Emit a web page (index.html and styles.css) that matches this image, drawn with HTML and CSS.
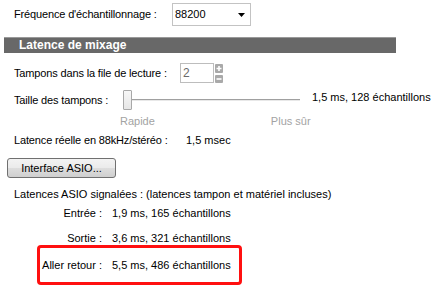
FILE: index.html
```html
<!DOCTYPE html>
<html lang="fr">
<head>
<meta charset="utf-8">
<link rel="stylesheet" href="styles.css">
</head>
<body>
<div class="panel">
  <div class="row freq">
    <span class="lbl w-freq">Fréquence d'échantillonnage :</span>
    <div class="select">
      <span class="select-val">88200</span>
      <svg class="select-arrow" width="7" height="4" viewBox="0 0 7 4"><path d="M0 0H7L3.5 4Z" fill="#000"/></svg>
    </div>
  </div>

  <div class="header">Latence de mixage</div>

  <div class="row tampons">
    <span class="lbl w-tampons">Tampons dans la file de lecture :</span>
    <div class="spin-box">2</div>
    <div class="spin-btns">
      <svg width="8" height="9" viewBox="0 0 8 9"><rect x="0" y="0" width="8" height="9" rx="1" fill="#a9a9a9"/><path d="M1.5 4.5H6.5M4 2V7" stroke="#fff" stroke-width="1.6"/></svg>
      <svg width="8" height="8" viewBox="0 0 8 8"><rect x="0" y="0" width="8" height="8" rx="1" fill="#a9a9a9"/><path d="M1.5 4H6.5" stroke="#fff" stroke-width="1.6"/></svg>
    </div>
  </div>

  <div class="row slider-row">
    <span class="lbl w-taille">Taille des tampons :</span>
    <div class="slider">
      <div class="thumb"></div>
      <div class="track"></div>
    </div>
    <span class="slider-val">1,5 ms, 128 échantillons</span>
  </div>

  <div class="row scale">
    <span class="scale-left">Rapide</span>
    <span class="scale-right">Plus sûr</span>
  </div>

  <div class="row reelle">
    <span class="lbl w-reelle">Latence réelle en 88kHz/stéréo :</span>
    <span>1,5 msec</span>
  </div>

  <button class="btn" type="button">Interface ASIO...</button>

  <div class="row asio-title">Latences ASIO signalées : (latences tampon et matériel incluses)</div>

  <div class="lat-list">
    <div class="lat-row entree"><span class="lat-lbl">Entrée :</span><span>1,9 ms, 165 échantillons</span></div>
    <div class="lat-row sortie"><span class="lat-lbl">Sortie :</span><span>3,6 ms, 321 échantillons</span></div>
    <div class="lat-row roundtrip"><span class="lat-lbl">Aller retour :</span><span>5,5 ms, 486 échantillons</span></div>
  </div>
</div>
</body>
</html>
```

FILE: styles.css
```css
html, body {
  margin: 0;
  padding: 0;
  background: #ffffff;
}

body {
  font-family: "Liberation Sans", Arial, sans-serif;
  font-size: 11px;
  line-height: 13px;
  color: #000;
  width: 443px;
  height: 289px;
  overflow: hidden;
}

.panel {
  display: flex;
  flex-direction: column;
}

.row {
  display: flex;
  align-items: center;
  padding-left: 14px;
}

.lbl {
  flex: none;
  letter-spacing: -0.15px;
}

.freq {
  margin-top: 3px;
  height: 23px;
}

.w-freq { width: 158px; }

.select {
  width: 75px;
  height: 21px;
  border: 1px solid #c3c3c3;
  background: #fff;
  display: flex;
  align-items: center;
  padding-left: 2px;
  box-sizing: content-box;
}

.select-val {
  flex: 1;
}

.select-arrow {
  margin-right: 5px;
}

.header {
  margin: 11px 0 0 4px;
  width: 392px;
  height: 15px;
  border-top: 1px solid #999999;
  background: #686868;
  color: #fff;
  font-weight: bold;
  font-size: 12px;
  line-height: 15px;
  padding-left: 15px;
  box-sizing: border-box;
  width: 392px;
  height: 16px;
}

.tampons {
  margin-top: 10px;
  height: 20px;
}

.w-tampons { width: 166px; }

.spin-box {
  width: 30px;
  height: 18px;
  border: 1px solid #bdbdbd;
  color: #6a6a6a;
  font-size: 12px;
  line-height: 18px;
  padding-left: 2px;
}

.spin-btns {
  display: flex;
  flex-direction: column;
  justify-content: space-between;
  height: 19px;
  margin-left: 1px;
  align-self: flex-start;
  padding-top: 1px;
}

.spin-btns svg {
  display: block;
}

.slider-row {
  margin-top: 7px;
  height: 20px;
}

.w-taille { width: 109px; }

.slider {
  display: flex;
  align-items: center;
  width: 177px;
  height: 20px;
}

.thumb {
  flex: none;
  width: 7px;
  height: 18px;
  border: 1px solid #a8a8a8;
  border-radius: 1px;
  background: linear-gradient(#f7f7f7, #e6e6e6);
}

.track {
  flex: 1;
  height: 0;
  border-top: 1px solid #a0a0a0;
  border-bottom: 1px solid #e8e8e8;
}

.slider-val {
  margin-left: 12px;
  margin-bottom: 5px;
  white-space: nowrap;
}

.scale {
  margin-top: 5px;
  height: 13px;
  color: #a3a3a3;
  padding-left: 120px;
}

.scale-right {
  margin-left: 116px;
}

.reelle {
  margin-top: 6px;
  height: 13px;
}

.w-reelle { width: 172px; }

.btn {
  margin: 11px 0 0 7px;
  width: 109px;
  height: 20px;
  border: 1px solid #707070;
  border-radius: 3px;
  background: linear-gradient(#f3f3f3 0%, #ebebeb 48%, #dddddd 52%, #cfcfcf 100%);
  font-family: "Liberation Sans", Arial, sans-serif;
  font-size: 11px;
  color: #000;
  padding: 0;
  align-self: flex-start;
}

.asio-title {
  margin-top: 10px;
  height: 13px;
  white-space: nowrap;
}

.lat-list {
  display: flex;
  flex-direction: column;
  padding-left: 40px;
  margin-top: 6px;
}

.lat-row {
  display: flex;
  align-items: center;
  height: 13px;
  gap: 10px;
  white-space: nowrap;
}

.lat-lbl {
  width: 62px;
  text-align: right;
  flex: none;
}

.sortie {
  margin-top: 12px;
}

.roundtrip {
  margin-top: 0;
  margin-left: -3px;
  width: 199px;
  height: 34px;
  border: 3px solid #ff1010;
  border-radius: 4px;
}
```
